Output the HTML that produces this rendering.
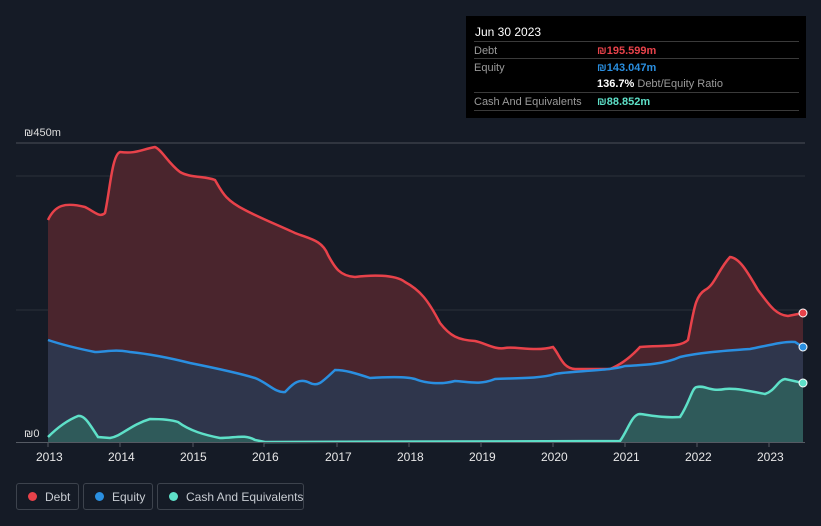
<!DOCTYPE html><html><head><style>
body{margin:0;background:#151b26;font-family:"Liberation Sans",sans-serif;width:821px;height:526px;overflow:hidden;position:relative}
.tt{position:absolute;left:466px;top:16px;width:340px;height:102px;background:#000;color:#fff;font-size:11px}
.row{position:absolute;left:8px;width:325px;border-top:1px solid #3a3a3a;height:17px}
.l{position:absolute;left:0;top:3px;color:#9a9a9a;white-space:nowrap}.v{position:absolute;left:123px;top:3px;font-weight:bold;white-space:nowrap}
.leg{position:absolute;top:483px;height:27px;border:1px solid #3d434d;border-radius:3px;color:#c8ccd2;font-size:12px;box-sizing:border-box;white-space:nowrap}
.leg span{position:absolute;top:8px;width:9px;height:9px;border-radius:50%;left:11px}
.leg b{font-weight:normal;position:absolute;top:6px;left:28px}
.yr{position:absolute;top:450px;color:#e8e8e8;font-size:12px}
</style></head><body>
<svg width="821" height="526" style="position:absolute;left:0;top:0">
<line x1="16" y1="143" x2="805" y2="143" stroke="#4a4f58"/>
<line x1="16" y1="176" x2="805" y2="176" stroke="#2c313a"/>
<line x1="16" y1="310" x2="805" y2="310" stroke="#2c313a"/>
<path d="M48,220 C55,205 65,202 85,207 C95,212 100,218 105,213 C110,190 112,155 120,152 C135,154 140,150 155,147 C162,150 168,163 180,172 C190,178 205,176 215,180 C222,192 225,200 245,210 C260,218 280,226 295,233 C310,239 322,240 328,255 C335,268 340,276 355,277 C370,275 395,274 405,282 C420,290 428,300 440,323 C450,336 458,340 475,341 C485,343 495,350 505,348 C515,346 535,352 553,347 C560,355 562,368 575,369 L610,369 C620,365 630,358 640,347 C660,345 680,348 688,340 C694,310 695,296 705,290 C715,285 718,270 730,257 C740,258 748,273 758,290 C768,303 775,315 788,316 L803,313 L803,442 L48,442Z" fill="#4a252d"/>
<path d="M48,340 C60,344 75,348 95,352 C105,352 115,349 130,352 C150,354 170,358 190,363 C210,367 235,372 255,378 C268,383 275,393 285,392 C292,385 298,377 310,383 C318,387 322,382 335,370 C345,370 355,373 370,378 C385,377 405,376 415,379 C425,383 440,385 455,381 C470,382 480,385 495,379 C510,378 540,379 555,374 C570,371 610,371 625,366 C645,365 665,364 680,357 C697,353 720,351 750,349 C770,345 785,341 795,342 L803,347 L803,442 L48,442Z" fill="#2a3a52" opacity=".85"/>
<path d="M48,437 C58,427 68,420 78,416 C85,415 90,425 98,437 L110,438 C122,436 130,425 150,419 C165,419 172,420 178,422 C190,431 205,435 220,438 C235,438 245,434 255,440 L265,442 L620,441 C628,430 632,414 640,414 C650,415 660,418 680,417 C690,402 692,387 697,387 C705,385 710,392 725,389 C735,388 750,391 765,394 C775,391 778,380 785,379 L803,383 L803,442 L48,442Z" fill="#2f5a5a"/>
<path d="M48,220 C55,205 65,202 85,207 C95,212 100,218 105,213 C110,190 112,155 120,152 C135,154 140,150 155,147 C162,150 168,163 180,172 C190,178 205,176 215,180 C222,192 225,200 245,210 C260,218 280,226 295,233 C310,239 322,240 328,255 C335,268 340,276 355,277 C370,275 395,274 405,282 C420,290 428,300 440,323 C450,336 458,340 475,341 C485,343 495,350 505,348 C515,346 535,352 553,347 C560,355 562,368 575,369 L610,369 C620,365 630,358 640,347 C660,345 680,348 688,340 C694,310 695,296 705,290 C715,285 718,270 730,257 C740,258 748,273 758,290 C768,303 775,315 788,316 L803,313" fill="none" stroke="#e8424a" stroke-width="2.5"/>
<path d="M48,340 C60,344 75,348 95,352 C105,352 115,349 130,352 C150,354 170,358 190,363 C210,367 235,372 255,378 C268,383 275,393 285,392 C292,385 298,377 310,383 C318,387 322,382 335,370 C345,370 355,373 370,378 C385,377 405,376 415,379 C425,383 440,385 455,381 C470,382 480,385 495,379 C510,378 540,379 555,374 C570,371 610,371 625,366 C645,365 665,364 680,357 C697,353 720,351 750,349 C770,345 785,341 795,342 L803,347" fill="none" stroke="#2a8fe0" stroke-width="2.5"/>
<path d="M48,437 C58,427 68,420 78,416 C85,415 90,425 98,437 L110,438 C122,436 130,425 150,419 C165,419 172,420 178,422 C190,431 205,435 220,438 C235,438 245,434 255,440 L265,442 L620,441 C628,430 632,414 640,414 C650,415 660,418 680,417 C690,402 692,387 697,387 C705,385 710,392 725,389 C735,388 750,391 765,394 C775,391 778,380 785,379 L803,383" fill="none" stroke="#5ee0c8" stroke-width="2.5"/>
<line x1="16" y1="442.5" x2="805" y2="442.5" stroke="#555a63"/>
<circle cx="803" cy="313" r="4" fill="#e8424a" stroke="#fff" stroke-width="1"/>
<circle cx="803" cy="347" r="4" fill="#2a8fe0" stroke="#fff" stroke-width="1"/>
<circle cx="803" cy="383" r="4" fill="#5ee0c8" stroke="#fff" stroke-width="1"/>
<g stroke="#555a63"><line x1="48" y1="442" x2="48" y2="447"/><line x1="120" y1="442" x2="120" y2="447"/><line x1="193" y1="442" x2="193" y2="447"/><line x1="264" y1="442" x2="264" y2="447"/><line x1="337" y1="442" x2="337" y2="447"/><line x1="409" y1="442" x2="409" y2="447"/><line x1="481" y1="442" x2="481" y2="447"/><line x1="553" y1="442" x2="553" y2="447"/><line x1="625" y1="442" x2="625" y2="447"/><line x1="697" y1="442" x2="697" y2="447"/><line x1="769" y1="442" x2="769" y2="447"/></g>
<text x="24" y="136" fill="#ddd" font-size="11" font-family="Liberation Sans">₪450m</text>
<text x="24" y="437" fill="#ddd" font-size="11" font-family="Liberation Sans">₪0</text>
</svg>
<div class="yr" style="left:36px">2013</div><div class="yr" style="left:108px">2014</div><div class="yr" style="left:180px">2015</div><div class="yr" style="left:252px">2016</div><div class="yr" style="left:325px">2017</div><div class="yr" style="left:397px">2018</div><div class="yr" style="left:469px">2019</div><div class="yr" style="left:541px">2020</div><div class="yr" style="left:613px">2021</div><div class="yr" style="left:685px">2022</div><div class="yr" style="left:757px">2023</div>
<div class="tt">
<div style="position:absolute;left:9px;top:9px;font-size:12px">Jun 30 2023</div>
<div class="row" style="top:25px"><span class="l">Debt</span><span class="v" style="color:#e8424a">₪195.599m</span></div>
<div class="row" style="top:42px"><span class="l">Equity</span><span class="v" style="color:#2a8fe0">₪143.047m</span></div>
<div class="row" style="top:59px;border-top:none"><span class="v" style="color:#fff">136.7% <span style="font-weight:normal;color:#9a9a9a">Debt/Equity Ratio</span></span></div>
<div class="row" style="top:76px"><span class="l">Cash And Equivalents</span><span class="v" style="color:#5ee0c8">₪88.852m</span></div>
<div class="row" style="top:94px;height:0"></div>
</div>
<div class="leg" style="left:16px;width:63px"><span style="background:#e8424a"></span><b>Debt</b></div>
<div class="leg" style="left:83px;width:70px"><span style="background:#2a8fe0"></span><b>Equity</b></div>
<div class="leg" style="left:157px;width:147px"><span style="background:#5ee0c8"></span><b>Cash And Equivalents</b></div>
</body></html>
